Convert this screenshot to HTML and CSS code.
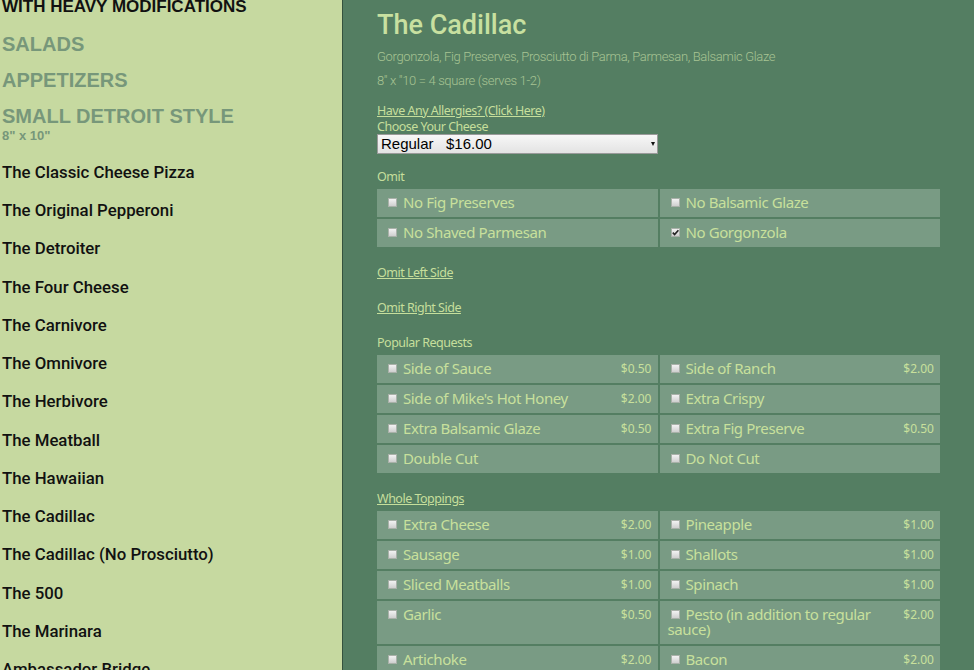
FILE: index.html
```html
<!DOCTYPE html>
<html lang="en">
<head>
<meta charset="utf-8">
<title>The Cadillac</title>
<link rel="stylesheet" href="styles.css">
</head>
<body>
<div class="page">
  <aside class="sidebar">
    <div class="sidebar-inner">
      <h2 class="cat cat-dark">WITH HEAVY MODIFICATIONS</h2>
      <h2 class="cat">SALADS</h2>
      <h2 class="cat">APPETIZERS</h2>
      <h2 class="cat cat-sub">SMALL DETROIT STYLE</h2>
      <div class="cat-note">8" x 10"</div>
      <ul class="items">
        <li>The Classic Cheese Pizza</li>
        <li>The Original Pepperoni</li>
        <li>The Detroiter</li>
        <li>The Four Cheese</li>
        <li>The Carnivore</li>
        <li>The Omnivore</li>
        <li>The Herbivore</li>
        <li>The Meatball</li>
        <li>The Hawaiian</li>
        <li>The Cadillac</li>
        <li>The Cadillac (No Prosciutto)</li>
        <li>The 500</li>
        <li>The Marinara</li>
        <li>Ambassador Bridge</li>
      </ul>
    </div>
  </aside>
  <main class="main">
    <h1 class="title">The Cadillac</h1>
    <p class="desc">Gorgonzola, Fig Preserves, Prosciutto di Parma, Parmesan, Balsamic Glaze</p>
    <p class="desc">8" x "10 = 4 square (serves 1-2)</p>
    <a class="link allergy" href="#">Have Any Allergies? (Click Here)</a>
    <div class="label cheese">Choose Your Cheese</div>
    <div class="select-wrap">
      <select class="select">
        <option>Regular&nbsp;&nbsp;&nbsp;$16.00</option>
      </select>
    </div>

    <div class="label sec-omit">Omit</div>
    <div class="opts">
      <label class="opt"><span class="cb"></span>No Fig Preserves</label>
      <label class="opt"><span class="cb"></span>No Balsamic Glaze</label>
      <label class="opt"><span class="cb"></span>No Shaved Parmesan</label>
      <label class="opt"><span class="cb cb-on"><svg viewBox="0 0 9 9" width="9" height="9"><path d="M1.8 4.6 L3.6 6.6 L7.4 2.2" fill="none" stroke="#222" stroke-width="1.6"/></svg></span>No Gorgonzola</label>
    </div>

    <a class="link sec-left" href="#">Omit Left Side</a>
    <a class="link sec-right" href="#">Omit Right Side</a>

    <div class="label sec-popular">Popular Requests</div>
    <div class="opts">
      <label class="opt"><span class="price">$0.50</span><span class="cb"></span>Side of Sauce</label>
      <label class="opt"><span class="price">$2.00</span><span class="cb"></span>Side of Ranch</label>
      <label class="opt"><span class="price">$2.00</span><span class="cb"></span>Side of Mike's Hot Honey</label>
      <label class="opt"><span class="cb"></span>Extra Crispy</label>
      <label class="opt"><span class="price">$0.50</span><span class="cb"></span>Extra Balsamic Glaze</label>
      <label class="opt"><span class="price">$0.50</span><span class="cb"></span>Extra Fig Preserve</label>
      <label class="opt"><span class="cb"></span>Double Cut</label>
      <label class="opt"><span class="cb"></span>Do Not Cut</label>
    </div>

    <a class="link sec-whole" href="#">Whole Toppings</a>
    <div class="opts">
      <label class="opt"><span class="price">$2.00</span><span class="cb"></span>Extra Cheese</label>
      <label class="opt"><span class="price">$1.00</span><span class="cb"></span>Pineapple</label>
      <label class="opt"><span class="price">$1.00</span><span class="cb"></span>Sausage</label>
      <label class="opt"><span class="price">$1.00</span><span class="cb"></span>Shallots</label>
      <label class="opt"><span class="price">$1.00</span><span class="cb"></span>Sliced Meatballs</label>
      <label class="opt"><span class="price">$1.00</span><span class="cb"></span>Spinach</label>
      <label class="opt"><span class="price">$0.50</span><span class="cb"></span>Garlic</label>
      <label class="opt"><span class="price">$2.00</span><span class="cb"></span>Pesto (in addition to regular sauce)</label>
      <label class="opt"><span class="price">$2.00</span><span class="cb"></span>Artichoke</label>
      <label class="opt"><span class="price">$2.00</span><span class="cb"></span>Bacon</label>
    </div>
  </main>
</div>
</body>
</html>
```
FILE: styles.css
```css
html, body {
  margin: 0;
  padding: 0;
  height: 100%;
  overflow: hidden;
}

body {
  background: #547e62;
}

.page {
  display: grid;
  grid-template-columns: 343px 1fr;
  height: 670px;
  overflow: hidden;
}

/* ---------- sidebar ---------- */
.sidebar {
  background: #c6d9a0;
  border-right: 1px solid #35523d;
  overflow: hidden;
}

.sidebar-inner {
  margin-top: -3.9px;
  padding-left: 2px;
}

.cat {
  font: bold 20px/22px "Liberation Sans", Arial, sans-serif;
  color: #77977a;
  margin: 0 0 14.4px;
}

.cat-dark {
  font-size: 17px;
  color: #111;
}

.cat-sub {
  margin-bottom: 1.3px;
}

.cat-note {
  font: bold 13px/14px "Liberation Sans", Arial, sans-serif;
  color: #77977a;
}

.items {
  list-style: none;
  margin: 10.2px 0 0;
  padding: 0;
}

.items li {
  font: 500 16.8px/38.25px Roboto, "Liberation Sans", sans-serif;
  color: #111;
  white-space: nowrap;
}

/* ---------- main ---------- */
.main {
  padding: 8px 0 0 34px;
  overflow: hidden;
  color: #c6df9c;
  font-family: "Noto Sans", "Open Sans", sans-serif;
}

.title {
  font: 500 27px/34px Roboto, "Liberation Sans", sans-serif;
  color: #c8e0a0;
  margin: 0 0 3px;
}

.desc {
  font: 300 13px/24px Roboto, "Liberation Sans", sans-serif;
  letter-spacing: -0.35px;
  color: #a7c493;
  margin: 0;
}

.link {
  display: block;
  width: max-content;
  color: #c6df9c;
  text-decoration: underline;
  font-size: 12.5px;
  letter-spacing: -0.5px;
  line-height: 16px;
}

.allergy {
  margin-top: 10px;
}

.label {
  font-size: 12.5px;
  letter-spacing: -0.5px;
  line-height: 16px;
}

.cheese {
  margin-top: 1px;
  line-height: 14px;
}

.select-wrap {
  position: relative;
  width: 281px;
  height: 20px;
}

.select {
  appearance: none;
  -webkit-appearance: none;
  display: block;
  width: 281px;
  height: 20px;
  margin: 0;
  padding: 0 0 0 3px;
  border: 1px solid #9a9a9a;
  border-radius: 0;
  background: linear-gradient(#f7f7f7, #e3e3e3);
  color: #000;
  font: 15px/18px "Liberation Sans", Arial, sans-serif;
}

.select-wrap::after {
  content: "";
  position: absolute;
  right: 3px;
  top: 8px;
  border-left: 2.5px solid transparent;
  border-right: 2.5px solid transparent;
  border-top: 4px solid #111;
  pointer-events: none;
}

.sec-omit { margin-top: 15px; }
.sec-left { margin-top: 18px; }
.sec-right { margin-top: 19px; }
.sec-popular { margin-top: 19px; }
.sec-whole { margin-top: 18px; }

.opts {
  display: grid;
  grid-template-columns: 1fr 1fr;
  gap: 2px;
  width: 563px;
  margin-top: 4px;
}

.opt {
  display: block;
  background: #799b84;
  padding: 6px 6px 7px 8px;
  font-size: 15px;
  letter-spacing: -0.4px;
  line-height: 15px;
  color: #c8e09c;
}

.cb {
  display: inline-block;
  box-sizing: border-box;
  width: 9px;
  height: 9px;
  margin: 0 6px 0 3px;
  vertical-align: 1px;
  background: linear-gradient(#f2f2f2, #cfcfcf);
  border: 1px solid #a9b1a9;
  position: relative;
}

.cb svg {
  position: absolute;
  left: -1px;
  top: -1px;
}

.price {
  float: right;
  font-size: 12px;
  letter-spacing: 0;
  line-height: 15px;
}
```
